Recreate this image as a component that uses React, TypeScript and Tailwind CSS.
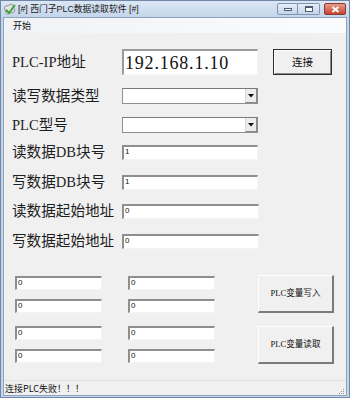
import React from "react";

const labelCls =
  "w-[118px] shrink-0 pl-[8px] text-[14.6px] leading-none text-[#1e1e1e] font-['Liberation_Serif','Noto_Sans_CJK_SC',serif] whitespace-nowrap";

function Sunken({ w, h, value }: { w: string; h: string; value?: string }) {
  return (
    <div
      className={`${w} ${h} bg-white border-t-2 border-l-2 border-[#8e8e8e] border-b border-r border-b-[#f4f4f4] border-r-[#f4f4f4] text-[8px] leading-none pl-[1px] pt-[1px] text-[#111] font-['Liberation_Sans',sans-serif] overflow-hidden`}
    >
      {value}
    </div>
  );
}

function Combo() {
  return (
    <div className="w-[136px] h-[16px] bg-white border border-[#8f8f8f] border-t-[#7a7a7a] flex justify-end">
      <div className="w-[12px] h-full bg-[#ececec] border-l border-[#d9d9d9] border-b border-r border-b-[#8a8a8a] border-r-[#8a8a8a] flex items-center justify-center">
        <svg width="6" height="4" viewBox="0 0 6 4">
          <path d="M0 0 H6 L3 3.5 Z" fill="#111" />
        </svg>
      </div>
    </div>
  );
}

function Row({ label, children, mt }: { label: string; children: React.ReactNode; mt: string }) {
  return (
    <div className={`flex items-center h-[16px] ${mt}`}>
      <div className={labelCls}>{label}</div>
      {children}
    </div>
  );
}

function RaisedButton({ text }: { text: string }) {
  return (
    <div className="w-[76px] h-[38px] bg-[#f0f0f0] border-t border-l border-[#fdfdfd] border-b-2 border-r-2 border-b-[#7a7a7a] border-r-[#7a7a7a] flex items-center justify-center text-[8.6px] text-[#111] font-['Liberation_Serif','Noto_Sans_CJK_SC',serif] whitespace-nowrap">
      {text}
    </div>
  );
}

export default function App() {
  return (
    <div className="w-[350px] h-[398px] bg-[#c6d6ea] border border-[#6f86a6] flex flex-col overflow-hidden font-['Noto_Sans_CJK_SC',sans-serif]">
      {/* title bar */}
      <div className="h-[16px] flex items-center bg-gradient-to-b from-[#dce7f4] to-[#c4d5eb] pl-[3px] pr-[3px]">
        <svg width="12" height="12" viewBox="0 0 12 12" className="shrink-0">
          <rect x="1" y="2" width="9" height="8" rx="1" fill="#e2e2e2" stroke="#8a8a8a" strokeWidth="0.8" transform="rotate(-20 6 6)" />
          <path d="M2 7 L5 10 L11 2" stroke="#2fa02f" strokeWidth="1.8" fill="none" />
        </svg>
        <span className="ml-[2px] text-[8.8px] leading-none text-[#1b1b1b] whitespace-nowrap font-['Liberation_Sans','Noto_Sans_CJK_SC',sans-serif]">
          [#] 西门子PLC数据读取软件 [#]
        </span>
        <div className="flex-1" />
        <div className="flex items-center self-start mt-[2px]">
          <div className="w-[21px] h-[12px] rounded-l-[2px] border border-[#8094b2] bg-gradient-to-b from-[#e6eef8] to-[#c3d3e8] flex items-center justify-center">
            <div className="w-[8px] h-[3px] bg-white border border-[#4b5c74]" />
          </div>
          <div className="w-[22px] h-[12px] rounded-r-[2px] border border-l-0 border-[#8094b2] bg-gradient-to-b from-[#e6eef8] to-[#c3d3e8] flex items-center justify-center">
            <div className="w-[8px] h-[6px] bg-white border border-[#4b5c74] border-t-2" />
          </div>
          <div className="ml-[4px] w-[22px] h-[12px] rounded-[2px] border border-[#8a3b30] bg-gradient-to-b from-[#e79a8a] to-[#c4432f] flex items-center justify-center">
            <svg width="9" height="7" viewBox="0 0 9 7">
              <path d="M1.5 1 L7.5 6 M7.5 1 L1.5 6" stroke="#ffffff" strokeWidth="1.8" />
            </svg>
          </div>
        </div>
      </div>

      {/* body */}
      <div className="flex-1 mx-[2px] border border-[#8ea2bd] flex flex-col">
        {/* menu */}
        <div className="h-[15px] bg-gradient-to-r from-[#f0f2f5] to-[#fbfcfd] flex items-center pl-[9px] text-[9px] leading-none text-[#111]">
          开始
        </div>

        {/* client */}
        <div className="h-[347px] bg-[#f0f0f0] flex flex-col">
          <div className="flex items-center h-[30px] mt-[14px]">
            <div className={labelCls}>PLC-IP地址</div>
            <div className="w-[136px] h-[26px] bg-white border-t-2 border-l-2 border-[#9a9a9a] border-b border-r border-b-[#f6f6f6] border-r-[#f6f6f6] flex items-center pl-[1px] text-[18px] leading-none tracking-[0.8px] text-[#111] font-['Liberation_Serif',serif]">
              192.168.1.10
            </div>
            <div className="ml-[15px] w-[59px] h-[26px] bg-[#f0f0f0] border border-[#2e2e2e] shadow-[inset_1px_1px_0_#ffffff,inset_-1px_-1px_0_#8a8a8a] flex items-center justify-center text-[10.5px] leading-none text-[#111]">
              连接
            </div>
          </div>
          <Row label="读写数据类型" mt="mt-[11px]">
            <Combo />
          </Row>
          <Row label="PLC型号" mt="mt-[13px]">
            <Combo />
          </Row>
          <Row label="读数据DB块号" mt="mt-[11px]">
            <Sunken w="w-[136px]" h="h-[15px]" value="1" />
          </Row>
          <Row label="写数据DB块号" mt="mt-[14px]">
            <Sunken w="w-[136px]" h="h-[15px]" value="1" />
          </Row>
          <Row label="读数据起始地址" mt="mt-[13px]">
            <Sunken w="w-[137px]" h="h-[15px]" value="0" />
          </Row>
          <Row label="写数据起始地址" mt="mt-[14px]">
            <Sunken w="w-[137px]" h="h-[15px]" value="0" />
          </Row>

          <div className="flex mt-[26px]">
            <div className="pl-[11px] flex flex-col">
              <div className="flex gap-[26px] mt-[1px]">
                <Sunken w="w-[87px]" h="h-[14px]" value="0" />
                <Sunken w="w-[87px]" h="h-[14px]" value="0" />
              </div>
              <div className="flex gap-[26px] mt-[9px]">
                <Sunken w="w-[87px]" h="h-[14px]" value="0" />
                <Sunken w="w-[87px]" h="h-[14px]" value="0" />
              </div>
              <div className="flex gap-[26px] mt-[13px]">
                <Sunken w="w-[87px]" h="h-[14px]" value="0" />
                <Sunken w="w-[87px]" h="h-[14px]" value="0" />
              </div>
              <div className="flex gap-[26px] mt-[9px]">
                <Sunken w="w-[87px]" h="h-[14px]" value="0" />
                <Sunken w="w-[87px]" h="h-[14px]" value="0" />
              </div>
            </div>
            <div className="ml-[43px] flex flex-col gap-[13px]">
              <RaisedButton text="PLC变量写入" />
              <RaisedButton text="PLC变量读取" />
            </div>
          </div>
        </div>

        {/* status bar */}
        <div className="h-[15px] bg-[#f0f0f0] border-t border-[#e2e2e2] flex items-center pl-[1px] text-[9px] leading-none text-[#111] relative">
          连接PLC失败！！！
          <div className="absolute right-[2px] bottom-[1px] grid grid-cols-3 gap-[1px]">
            <span />
            <span />
            <span className="w-[1px] h-[1px] bg-[#9a9a9a]" />
            <span />
            <span className="w-[1px] h-[1px] bg-[#9a9a9a]" />
            <span className="w-[1px] h-[1px] bg-[#9a9a9a]" />
            <span className="w-[1px] h-[1px] bg-[#9a9a9a]" />
            <span className="w-[1px] h-[1px] bg-[#9a9a9a]" />
            <span className="w-[1px] h-[1px] bg-[#9a9a9a]" />
          </div>
        </div>
      </div>
      <div className="h-[1px]" />
    </div>
  );
}
